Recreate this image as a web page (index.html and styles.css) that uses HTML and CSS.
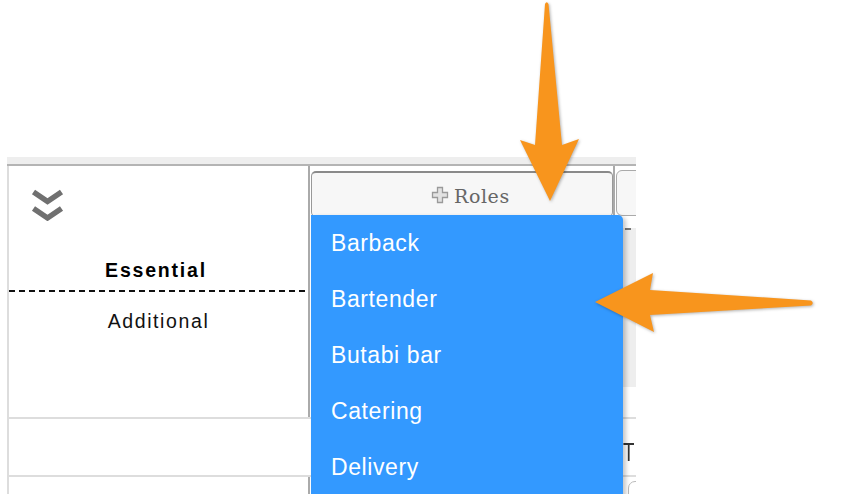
FILE: index.html
```html
<!DOCTYPE html>
<html>
<head>
<meta charset="utf-8">
<link rel="stylesheet" href="styles.css">
</head>
<body>
<div class="page">
  <div class="spacer"></div>
  <div class="grid">
    <div class="band"></div>
    <div class="row head">
      <div class="c1">
        <svg class="chev" width="36" height="36" viewBox="0 0 36 36">
          <defs><filter id="soft"><feGaussianBlur stdDeviation="0.6"/></filter></defs>
          <g fill="none" stroke="#707070" stroke-width="5.5" filter="url(#soft)">
            <polyline points="3.5,3 17.5,12.5 31.5,3"/>
            <polyline points="3.5,19.5 17.5,29 31.5,19.5"/>
          </g>
        </svg>
        <div class="ess">Essential</div>
        <div class="dash"></div>
        <div class="add">Additional</div>
      </div>
      <div class="c2">
        <div class="btn">
          <svg class="plus" width="18" height="18" viewBox="0 0 18 18">
            <path d="M6.5,1.5 h5 v5 h5 v5 h-5 v5 h-5 v-5 h-5 v-5 h5 z" fill="#e2e2e2" stroke="#9a9a9a" stroke-width="1.3"/>
          </svg>
          <span class="roles">Roles</span>
        </div>
      </div>
      <div class="c3">
        <div class="btn3"></div>
        <div class="graybox"><div class="tick"></div></div>
      </div>
    </div>
    <div class="row r2">
      <div class="c1 plain"></div>
      <div class="c2 plain"></div>
      <div class="c3"><span class="t">T</span></div>
    </div>
    <div class="row r3">
      <div class="c1"></div>
      <div class="c2"></div>
      <div class="c3"><div class="box3"></div></div>
    </div>
  </div>

  <ul class="menu">
    <li>Barback</li>
    <li>Bartender</li>
    <li>Butabi bar</li>
    <li>Catering</li>
    <li>Delivery</li>
  </ul>

  <svg class="arrows" width="856" height="494" viewBox="0 0 856 494">
    <path d="M545,4 Q546.7,0.5 548.5,4 L562,145 L579,139 L550,201 L520,140 L535,145 Z" fill="#f8951d"/>
    <path d="M595,302 L653,273 L650,290 L811,300.5 Q814.5,303 811,305.5 L650,315 L654,332 Z" fill="#f8951d"/>
  </svg>
</div>
</body>
</html>
```

FILE: styles.css
```css
html, body {
  margin: 0;
  padding: 0;
  background: #ffffff;
  overflow: hidden;
}

.page {
  position: relative;
  width: 856px;
  height: 494px;
  overflow: hidden;
  font-family: "Liberation Sans", Arial, sans-serif;
}

.spacer {
  height: 157px;
}

.grid {
  margin-left: 7px;
  width: 629px;
  overflow: hidden;
}

.band {
  height: 7px;
  background: #eeeeee;
  border-bottom: 2px solid #b4b4b4;
}

.row {
  display: grid;
  grid-template-columns: 303px 305px 60px;
}

.c1 {
  box-sizing: border-box;
  border-left: 2px solid #dddddd;
  border-right: 2px solid #aaaaaa;
}

.c1.plain {
  border-right: none;
}

.c2 {
  box-sizing: border-box;
}

.head {
  height: 251px;
}

.head .c2 {
  border-right: 2px solid #aaaaaa;
}

.chev {
  display: block;
  margin: 23px 0 0 21px;
}

.ess {
  margin-top: 34px;
  font-size: 19.5px;
  line-height: 22px;
  font-weight: bold;
  letter-spacing: 1.8px;
  text-align: center;
  color: #000;
  padding-right: 5px;
}

.dash {
  margin-top: 9px;
  height: 2px;
  background: repeating-linear-gradient(to right, #111 0 6px, transparent 6px 10px);
}

.add {
  margin-top: 18px;
  font-size: 19.5px;
  line-height: 22px;
  letter-spacing: 1.6px;
  text-align: center;
  color: #111;
}

.btn {
  box-sizing: border-box;
  margin: 5px 0 0 1px;
  width: 302px;
  height: 46px;
  background: #f7f7f7;
  border: 1px solid #999;
  border-top: 2px solid #8a8a8a;
  border-radius: 5px;
  display: flex;
  align-items: center;
  padding-left: 119px;
  padding-top: 3px;
  gap: 5px;
}

.plus {
  display: block;
  margin-top: -3px;
}

.roles {
  font-family: "DejaVu Serif", serif;
  font-size: 19px;
  letter-spacing: 0.6px;
  color: #666;
}

.btn3 {
  box-sizing: border-box;
  margin: 4px 0 0 1px;
  height: 46px;
  background: #f7f7f7;
  border: 1px solid #aaa;
  border-radius: 6px;
}

.graybox {
  margin-top: 12px;
  height: 159px;
  background: #eeeeee;
}

.tick {
  margin-left: 10px;
  width: 6px;
  height: 2px;
  background: #777;
}

.r2 {
  height: 56px;
  border-top: 2px solid #dddddd;
  border-bottom: 2px solid #dddddd;
}

.r2 .c1 {
  border-right: none;
}

.t {
  display: inline-block;
  margin: 20px 0 0 8px;
  font-size: 26px;
  line-height: 26px;
  color: #333;
  transform: scaleX(0.72);
  transform-origin: left center;
}

.r3 {
  height: 40px;
}

.box3 {
  margin: 4px 0 0 13px;
  height: 30px;
  border: 1px solid #bbb;
  border-radius: 7px;
}

.menu {
  position: absolute;
  left: 311px;
  top: 215px;
  width: 312px;
  height: 300px;
  margin: 0;
  padding: 0;
  list-style: none;
  background: #3399ff;
  border-radius: 0 5px 0 0;
  box-shadow: 3px 2px 4px rgba(0, 0, 0, 0.22);
}

.menu li {
  height: 56px;
  line-height: 56px;
  padding-left: 20px;
  font-size: 23px;
  letter-spacing: 0.6px;
  color: #ffffff;
}

.arrows {
  position: absolute;
  left: 0;
  top: 0;
  pointer-events: none;
  filter: drop-shadow(1px 1px 1.5px rgba(0, 0, 0, 0.3));
}
```
